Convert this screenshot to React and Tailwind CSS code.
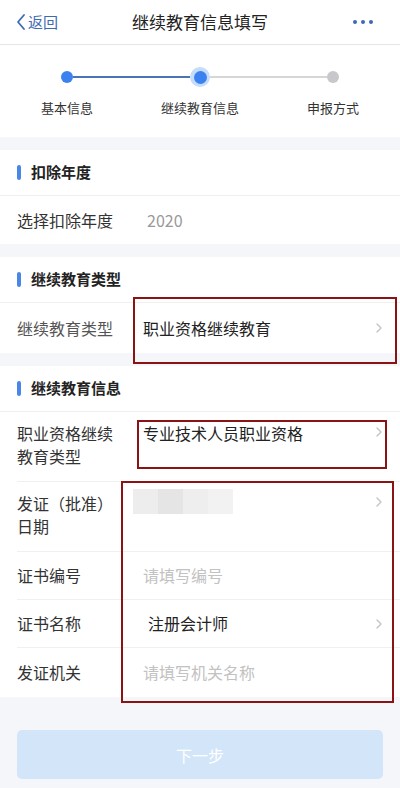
import React from "react";

const font = { fontFamily: '"Noto Sans CJK SC", "Noto Sans", sans-serif' };

function Chevron() {
  return (
    <svg width="8" height="12" viewBox="0 0 8 12" className="shrink-0">
      <path d="M2 2l4 4-4 4" fill="none" stroke="#c4c4c4" strokeWidth="1.4" strokeLinecap="round" strokeLinejoin="round" />
    </svg>
  );
}

function SectionTitle({ children }) {
  return (
    <div className="h-[46px] flex items-center pl-[17px] border-b border-[#f0f0f0]">
      <span className="w-[4px] h-[15px] rounded-full bg-[#4a86e8] mr-[10px]" />
      <span className="text-[15px] font-bold text-[#222]">{children}</span>
    </div>
  );
}

function Row({ label, children, arrow, h = "h-[48px]", top, last }) {
  return (
    <div className="ml-[17px]">
      <div className={`${h} flex ${top ? "items-start pt-[10px]" : "items-center"} pr-[17px] ${last ? "" : "border-b border-[#f0f0f0]"}`}>
        <div className="w-[126px] shrink-0 text-[16px] leading-[23px] text-[#333]">{label}</div>
        <div className="flex-1 text-[16px] leading-[23px]">{children}</div>
        {arrow && <div className={top ? "pt-[4px]" : ""}><Chevron /></div>}
      </div>
    </div>
  );
}

export default function App() {
  return (
    <div className="w-[400px] h-[788px] bg-[#f4f6f9] relative overflow-hidden" style={font}>
      {/* header */}
      <div className="h-[45px] bg-white border-b border-[#e6e6e6] flex items-center px-[15px]">
        <div className="flex items-center w-[80px] text-[#3d6bb3]">
          <svg width="12" height="18" viewBox="0 0 12 18">
            <path d="M9 2L3 9l6 7" fill="none" stroke="#3d6bb3" strokeWidth="1.8" strokeLinecap="round" strokeLinejoin="round" />
          </svg>
          <span className="text-[15px] ml-[1px]">返回</span>
        </div>
        <div className="flex-1 text-center text-[17px] text-[#222]">继续教育信息填写</div>
        <div className="w-[80px] flex justify-end pr-[12px] gap-[4px]">
          <span className="w-[4px] h-[4px] rounded-full bg-[#3d6bb3]" />
          <span className="w-[4px] h-[4px] rounded-full bg-[#3d6bb3]" />
          <span className="w-[4px] h-[4px] rounded-full bg-[#3d6bb3]" />
        </div>
      </div>

      {/* steps */}
      <div className="h-[92px] bg-white pt-[25px]">
        <div className="flex items-center mx-[61px] h-[14px]">
          <span className="w-[12px] h-[12px] rounded-full bg-[#3b82f0] shrink-0" />
          <span className="flex-1 h-[2px] bg-[#4b73b8]" />
          <span className="w-[20px] h-[20px] rounded-full bg-[#c5dcfa] flex items-center justify-center shrink-0">
            <span className="w-[13px] h-[13px] rounded-full bg-[#3b82f0]" />
          </span>
          <span className="flex-1 h-[2px] bg-[#d6d6d6]" />
          <span className="w-[12px] h-[12px] rounded-full bg-[#c8c8cc] shrink-0" />
        </div>
        <div className="flex justify-between mt-[14px] text-[13px] text-[#333] px-[40px]">
          <span className="w-[54px] text-center">基本信息</span>
          <span className="w-[80px] text-center">继续教育信息</span>
          <span className="w-[54px] text-center">申报方式</span>
        </div>
      </div>

      {/* 扣除年度 */}
      <div className="mt-[13px] bg-white">
        <SectionTitle>扣除年度</SectionTitle>
        <Row label="选择扣除年度" last>
          <span className="text-[#999] ml-[4px]">2020</span>
        </Row>
      </div>

      {/* 继续教育类型 */}
      <div className="mt-[13px] bg-white">
        <SectionTitle>继续教育类型</SectionTitle>
        <Row label={<span className="text-[#555]">继续教育类型</span>} arrow h="h-[50px]" last>
          <span className="text-[#222]">职业资格继续教育</span>
        </Row>
      </div>

      {/* 继续教育信息 */}
      <div className="mt-[13px] bg-white">
        <SectionTitle>继续教育信息</SectionTitle>
        <Row label={<>职业资格继续<br />教育类型</>} arrow h="h-[70px]" top>
          <span className="text-[#222]">专业技术人员职业资格</span>
        </Row>
        <Row label={<>发证（批准）<br />日期</>} arrow h="h-[70px]" top>
          <div className="flex h-[25px] -mt-[3px] -ml-[10px] w-[100px]">
            <span className="flex-1 bg-[#ededed]" />
            <span className="flex-1 bg-[#e5e5e5]" />
            <span className="flex-1 bg-[#eeeeee]" />
            <span className="flex-1 bg-[#f2f2f2]" />
          </div>
        </Row>
        <Row label="证书编号">
          <span className="text-[#c2c2c2]">请填写编号</span>
        </Row>
        <Row label="证书名称" arrow>
          <span className="text-[#222] ml-[5px]">注册会计师</span>
        </Row>
        <Row label="发证机关" h="h-[49px]" last>
          <span className="text-[#c2c2c2]">请填写机关名称</span>
        </Row>
      </div>

      {/* button */}
      <div className="px-[17px] mt-[33px]">
        <div className="h-[49px] rounded-[5px] bg-[#d3e5f9] flex items-center justify-center text-white text-[16px]">
          下一步
        </div>
      </div>

      {/* annotation boxes */}
      <div className="absolute left-[133px] top-[297px] w-[264px] h-[67px] border-2 border-[#8a1414] pointer-events-none" />
      <div className="absolute left-[137px] top-[420px] w-[250px] h-[49px] border-2 border-[#8a1414] pointer-events-none" />
      <div className="absolute left-[121px] top-[481px] w-[273px] h-[222px] border-2 border-[#8a1414] pointer-events-none" />
    </div>
  );
}
